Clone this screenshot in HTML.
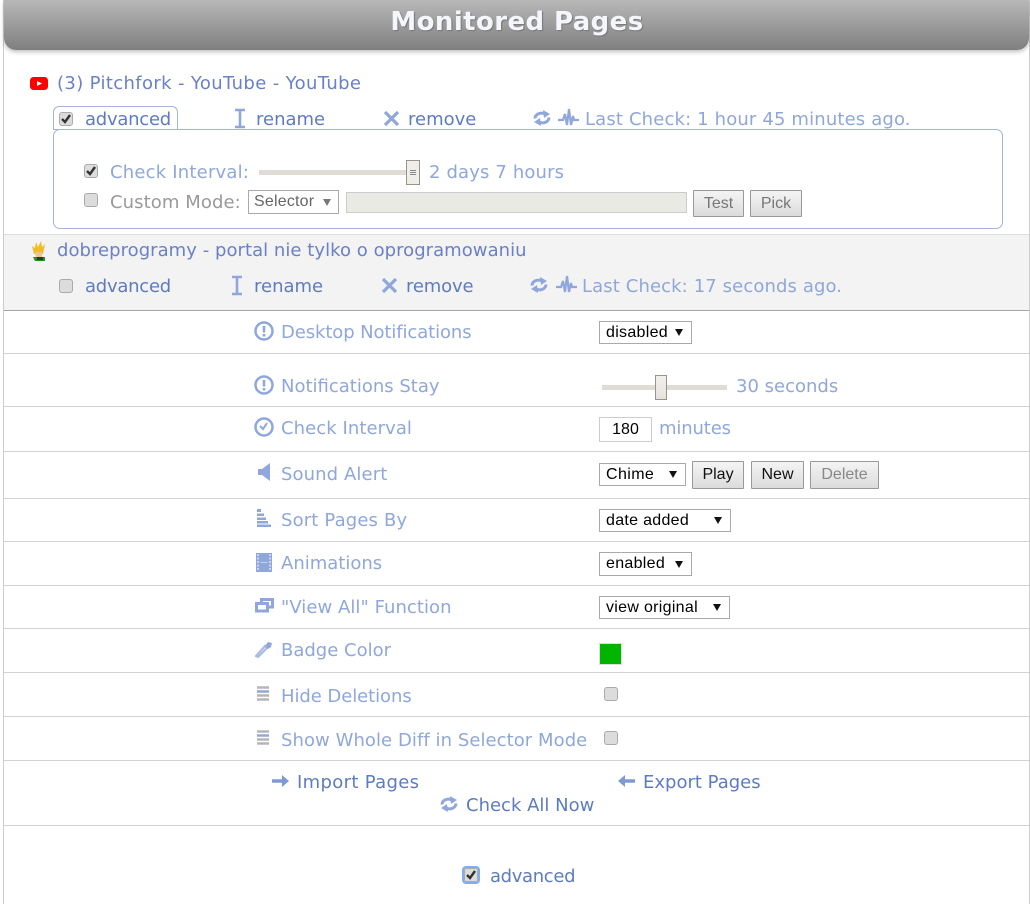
<!DOCTYPE html>
<html><head><meta charset="utf-8"><style>
html,body{margin:0;padding:0;background:#fff}
#p{position:relative;width:1030px;height:904px;overflow:hidden;background:#fff}
#p div,#p span,#p svg{position:absolute}
#p svg{filter:blur(.35px)}
.t{white-space:nowrap;font:18px/22px "DejaVu Sans",sans-serif;color:#8fa7da;margin-top:1px}
.d{color:#5d7cc0}
.k{color:#6a80c8}
.g{color:#999}
.h{height:1px;left:4px;width:1025px;background:#d2d2d2}
.s{background:#fff;border:1px solid #aaa;box-sizing:border-box;font:16px/22px "Liberation Sans",sans-serif;color:#000;padding-left:6px;white-space:nowrap;letter-spacing:.3px}
.a{width:0;height:0;border-left:4px solid transparent;border-right:4px solid transparent;border-top:7px solid #111}
.b{box-sizing:border-box;border:1px solid #999;border-radius:1px;background:linear-gradient(#f4f4f4,#dcdcdc);font:16px/25px "Liberation Sans",sans-serif;text-align:center;color:#111}
.c{box-sizing:border-box;width:14px;height:14px;border-radius:3px;background:#dcdcdc;border:1px solid #aaa}
</style></head><body><div id="p">
<div style="left:3px;top:0;width:1px;height:904px;background:#ccc"></div>
<div style="left:1029px;top:0;width:1px;height:904px;background:#ccc"></div>

<div style="left:4px;top:0;width:1025px;height:50px;background:linear-gradient(#b8b8b8,#7f7f7f);border-radius:0 0 12px 12px;box-shadow:0 2px 4px rgba(0,0,0,.25)"></div>
<div class="t" style="left:0;width:1034px;text-align:center;top:5px;font-size:26px;line-height:32px;font-weight:bold;color:#f4f6fb;text-shadow:1px 1px 1px #777;letter-spacing:.4px">Monitored Pages</div>

<svg style="left:30px;top:77px" width="18" height="13"><rect width="18" height="13" rx="3.500" fill="#f00"/><path d="M7 4l5 2.500-5 2.500z" fill="#fff"/></svg>
<div class="t k" style="left:57px;top:72px;letter-spacing:.36px">(3) Pitchfork - YouTube - YouTube</div>

<div style="left:53px;top:129px;width:950px;height:100px;box-sizing:border-box;border:1px solid #a3b6d9;border-radius:7px"></div>
<div style="left:53px;top:106px;width:125px;height:24px;box-sizing:border-box;border:1px solid #a3b6d9;border-bottom:0;border-radius:6px 6px 0 0;background:#fff"></div>
<div style="left:53px;top:129px;width:125px;height:1px;background:#a3b6d9"></div>

<div class="c" style="left:59px;top:112px"></div>
<svg style="left:59px;top:112px" width="14" height="14"><path d="M3 7l3 3 5-7" fill="none" stroke="#333" stroke-width="2.400"/></svg>
<div class="t d" style="left:85px;top:108px;letter-spacing:-.25px">advanced</div>
<svg style="left:234px;top:108px" width="12" height="21"><path d="M1 2h10M1 19h10M6 2v17" fill="none" stroke="#8fa7da" stroke-width="2.600"/></svg>
<div class="t d" style="left:256px;top:108px">rename</div>
<svg style="left:383px;top:110px" width="17" height="17"><path d="M2 2l13 13M15 2L2 15" fill="none" stroke="#8fa7da" stroke-width="3.200"/></svg>
<div class="t d" style="left:408px;top:108px">remove</div>
<svg style="left:533px;top:109px" width="18" height="18"><path d="M2 9.500a6.500 5.500 0 0 1 10-4.500M16 8.500a6.500 5.500 0 0 1-10 4.500" fill="none" stroke="#8fa7da" stroke-width="3"/><path d="M10 1l7 4-6 4zM8 17l-7-4 6-4z" fill="#8fa7da"/></svg>
<svg style="left:558px;top:108px" width="21" height="21"><path d="M0 12h5l2-6 2 11 2-16 2 16 2-9 1 4h5" fill="none" stroke="#8fa7da" stroke-width="2.200"/></svg>
<div class="t" style="left:585px;top:108px;letter-spacing:.15px">Last Check: 1 hour 45 minutes ago.</div>

<div class="c" style="left:84px;top:164px"></div>
<svg style="left:84px;top:164px" width="14" height="14"><path d="M3 7l3 3 5-7" fill="none" stroke="#333" stroke-width="2.400"/></svg>
<div class="t" style="left:110px;top:161px;letter-spacing:.2px">Check Interval:</div>
<div style="left:259px;top:170px;width:150px;height:5px;background:#e0dcd5"></div>
<div style="left:406px;top:160px;width:14px;height:25px;box-sizing:border-box;background:#efedea;border:1px solid #9a9488"></div>
<div style="left:410px;top:170px;width:6px;height:1px;background:#888"></div>
<div style="left:410px;top:172px;width:6px;height:1px;background:#888"></div>
<div style="left:410px;top:174px;width:6px;height:1px;background:#888"></div>
<div class="t" style="left:429px;top:161px;letter-spacing:.14px">2 days 7 hours</div>

<div class="c" style="left:84px;top:193px"></div>
<div class="t g" style="left:110px;top:191px;letter-spacing:.08px">Custom Mode:</div>
<div class="s" style="left:248px;top:190px;width:91px;height:24px;color:#666;padding-left:5px;letter-spacing:.2px">Selector</div>
<div class="a" style="left:323px;top:199px;border-top-color:#777"></div>
<div style="left:346px;top:192px;width:341px;height:21px;box-sizing:border-box;background:#eaeae4;border:1px solid #ccc"></div>
<div class="b" style="left:693px;top:190px;width:51px;height:27px;color:#777">Test</div>
<div class="b" style="left:750px;top:190px;width:52px;height:27px;color:#777">Pick</div>

<div style="left:4px;top:234px;width:1025px;height:76px;background:#f3f3f3;border-top:1px solid #ddd;box-sizing:border-box"></div>
<svg style="left:31px;top:241px" width="16" height="21"><path d="M3 13L1 5l3 2 1-6 2 5 3-6 1 6 3-3-2 10z" fill="#f2bd1f"/><path d="M4 11h7v5H5z" fill="#e9c98a"/><path d="M2 16h12v4H4z" fill="#2b8a2b"/><rect x="6" y="16" width="6" height="3" fill="#333"/></svg>
<div class="t k" style="left:57px;top:239px;letter-spacing:.04px">dobreprogramy - portal nie tylko o oprogramowaniu</div>
<div class="c" style="left:59px;top:279px"></div>
<div class="t d" style="left:85px;top:275px;letter-spacing:-.25px">advanced</div>
<svg style="left:231px;top:275px" width="12" height="21"><path d="M1 2h10M1 19h10M6 2v17" fill="none" stroke="#8fa7da" stroke-width="2.600"/></svg>
<div class="t d" style="left:254px;top:275px">rename</div>
<svg style="left:381px;top:277px" width="17" height="17"><path d="M2 2l13 13M15 2L2 15" fill="none" stroke="#8fa7da" stroke-width="3.200"/></svg>
<div class="t d" style="left:406px;top:275px;letter-spacing:-.15px">remove</div>
<svg style="left:530px;top:276px" width="18" height="18"><path d="M2 9.500a6.500 5.500 0 0 1 10-4.500M16 8.500a6.500 5.500 0 0 1-10 4.500" fill="none" stroke="#8fa7da" stroke-width="3"/><path d="M10 1l7 4-6 4zM8 17l-7-4 6-4z" fill="#8fa7da"/></svg>
<svg style="left:556px;top:275px" width="21" height="21"><path d="M0 12h5l2-6 2 11 2-16 2 16 2-9 1 4h5" fill="none" stroke="#8fa7da" stroke-width="2.200"/></svg>
<div class="t" style="left:582px;top:275px;letter-spacing:.11px">Last Check: 17 seconds ago.</div>
<div class="h" style="top:310px;background:#a5a5a5"></div>

<svg style="left:254px;top:321px" width="20" height="20"><circle cx="10" cy="10" r="8.500" fill="none" stroke="#8fa7da" stroke-width="2.500"/><path d="M10 5v6.500M10 13v2.500" stroke="#8fa7da" stroke-width="2.600"/></svg>
<div class="t" style="left:281px;top:321px;letter-spacing:-.1px">Desktop Notifications</div>
<div class="s" style="left:599px;top:321px;width:93px;height:23px">disabled</div>
<div class="a" style="left:675px;top:329px"></div>
<div class="h" style="top:353px"></div>

<svg style="left:254px;top:375px" width="20" height="20"><circle cx="10" cy="10" r="8.500" fill="none" stroke="#8fa7da" stroke-width="2.500"/><path d="M10 5v6.500M10 13v2.500" stroke="#8fa7da" stroke-width="2.600"/></svg>
<div class="t" style="left:281px;top:375px">Notifications Stay</div>
<div style="left:602px;top:385px;width:125px;height:5px;background:#e0dcd5"></div>
<div style="left:655px;top:375px;width:12px;height:25px;box-sizing:border-box;background:linear-gradient(#f2f0ed,#e6e3de);border:1px solid #9a9488"></div>
<div class="t" style="left:736px;top:375px">30 seconds</div>
<div class="h" style="top:406px"></div>

<svg style="left:254px;top:417px" width="20" height="20"><circle cx="10" cy="10" r="8.500" fill="none" stroke="#8fa7da" stroke-width="2.500"/><path d="M6 9l3 3 4-6" fill="none" stroke="#8fa7da" stroke-width="2"/></svg>
<div class="t" style="left:281px;top:417px;letter-spacing:.07px">Check Interval</div>
<div style="left:599px;top:417px;width:53px;height:25px;box-sizing:border-box;border:1px solid #ccc;font:16px/23px 'Liberation Sans',sans-serif;text-align:center;color:#000">180</div>
<div class="t" style="left:659px;top:417px;letter-spacing:-.14px">minutes</div>
<div class="h" style="top:451px"></div>

<svg style="left:258px;top:463px" width="14" height="18"><path d="M0 6h4l8-6v18l-8-6H0z" fill="#8fa7da"/></svg>
<div class="t" style="left:281px;top:463px;letter-spacing:.1px">Sound Alert</div>
<div class="s" style="left:599px;top:463px;width:87px;height:23px;letter-spacing:.4px">Chime</div>
<div class="a" style="left:669px;top:471px"></div>
<div class="b" style="left:692px;top:461px;width:52px;height:28px;line-height:26px">Play</div>
<div class="b" style="left:751px;top:461px;width:53px;height:28px;line-height:26px">New</div>
<div class="b" style="left:810px;top:461px;width:69px;height:28px;line-height:26px;color:#888">Delete</div>
<div class="h" style="top:498px"></div>

<svg style="left:256px;top:508px" width="16" height="20"><path d="M1 1h4v3H1zM1 5.500h7v2.500H1zM1 9.500h9v2.500H1zM1 13h11v2.500H1zM1 16.500h14V19H1z" fill="#8fa7da"/></svg>
<div class="t" style="left:281px;top:509px;letter-spacing:.15px">Sort Pages By</div>
<div class="s" style="left:599px;top:509px;width:132px;height:23px">date added</div>
<div class="a" style="left:714px;top:517px"></div>
<div class="h" style="top:541px"></div>

<svg style="left:256px;top:553px" width="16" height="19"><rect width="16" height="19" fill="#8fa7da"/><path d="M2 1v17M14 1v17" stroke="#dfe6f5" stroke-width="1.500" stroke-dasharray="2 1.500"/><path d="M4.500 9.500h7" stroke="#c5d2ec"/></svg>
<div class="t" style="left:281px;top:552px">Animations</div>
<div class="s" style="left:599px;top:552px;width:93px;height:24px">enabled</div>
<div class="a" style="left:675px;top:561px"></div>
<div class="h" style="top:585px"></div>

<svg style="left:255px;top:598px" width="19" height="15"><rect x="6.500" y="1.500" width="11" height="7.500" fill="#fff" stroke="#8fa7da" stroke-width="3"/><rect x="1.500" y="5.500" width="11" height="7.500" fill="#fff" stroke="#8fa7da" stroke-width="3"/></svg>
<div class="t" style="left:281px;top:596px;letter-spacing:.05px">"View All" Function</div>
<div class="s" style="left:599px;top:596px;width:131px;height:23px">view original</div>
<div class="a" style="left:713px;top:604px"></div>
<div class="h" style="top:628px"></div>

<svg style="left:255px;top:640px" width="19" height="18"><path d="M1 16l2 1 9-9-2-2z" fill="none" stroke="#a9bce2" stroke-width="2.200"/><path d="M10 6l3-4 4 1-1 4-3 2z" fill="#8fa7da"/></svg>
<div class="t" style="left:281px;top:639px">Badge Color</div>
<div style="left:599px;top:643px;width:23px;height:22px;box-sizing:border-box;background:#00b400;border:1px solid #ddd"></div>
<div class="h" style="top:672px"></div>

<svg style="left:256px;top:686px" width="14" height="15"><path d="M1 1.500h12M1 9.500h12M1 13.500h12" stroke="#b5b5b5" stroke-width="2.500"/><path d="M1 5.500h12" stroke="#8fa7da" stroke-width="2.500"/></svg>
<div class="t" style="left:281px;top:685px;letter-spacing:-.07px">Hide Deletions</div>
<div class="c" style="left:604px;top:687px"></div>
<div class="h" style="top:716px"></div>

<svg style="left:256px;top:730px" width="14" height="15"><path d="M1 1.500h12M1 9.500h12M1 13.500h12" stroke="#b5b5b5" stroke-width="2.500"/><path d="M1 5.500h12" stroke="#8fa7da" stroke-width="2.500"/></svg>
<div class="t" style="left:281px;top:729px;letter-spacing:.06px">Show Whole Diff in Selector Mode</div>
<div class="c" style="left:604px;top:731px"></div>
<div class="h" style="top:760px"></div>

<svg style="left:272px;top:774px" width="17" height="14"><path d="M0 7h11" stroke="#7f9ad2" stroke-width="3.500"/><path d="M10 1l7 6-7 6z" fill="#7f9ad2"/></svg>
<div class="t d" style="left:297px;top:771px;letter-spacing:.33px">Import Pages</div>
<svg style="left:618px;top:774px" width="17" height="14"><path d="M6 7h11" stroke="#7f9ad2" stroke-width="3.500"/><path d="M7 1L0 7l7 6z" fill="#7f9ad2"/></svg>
<div class="t d" style="left:643px;top:771px">Export Pages</div>
<svg style="left:440px;top:795px" width="18" height="18"><path d="M2 9.500a6.500 5.500 0 0 1 10-4.500M16 8.500a6.500 5.500 0 0 1-10 4.500" fill="none" stroke="#8fa7da" stroke-width="3"/><path d="M10 1l7 4-6 4zM8 17l-7-4 6-4z" fill="#8fa7da"/></svg>
<div class="t d" style="left:466px;top:794px">Check All Now</div>
<div class="h" style="top:825px"></div>

<div class="c" style="left:464px;top:868px;outline:2px solid #80aef0;outline-offset:0;border-radius:2px"></div>
<svg style="left:464px;top:868px" width="14" height="14"><path d="M3 7l3 3 5-7" fill="none" stroke="#333" stroke-width="2.400"/></svg>
<div class="t d" style="left:490px;top:865px;letter-spacing:-.35px">advanced</div>
</div></body></html>
